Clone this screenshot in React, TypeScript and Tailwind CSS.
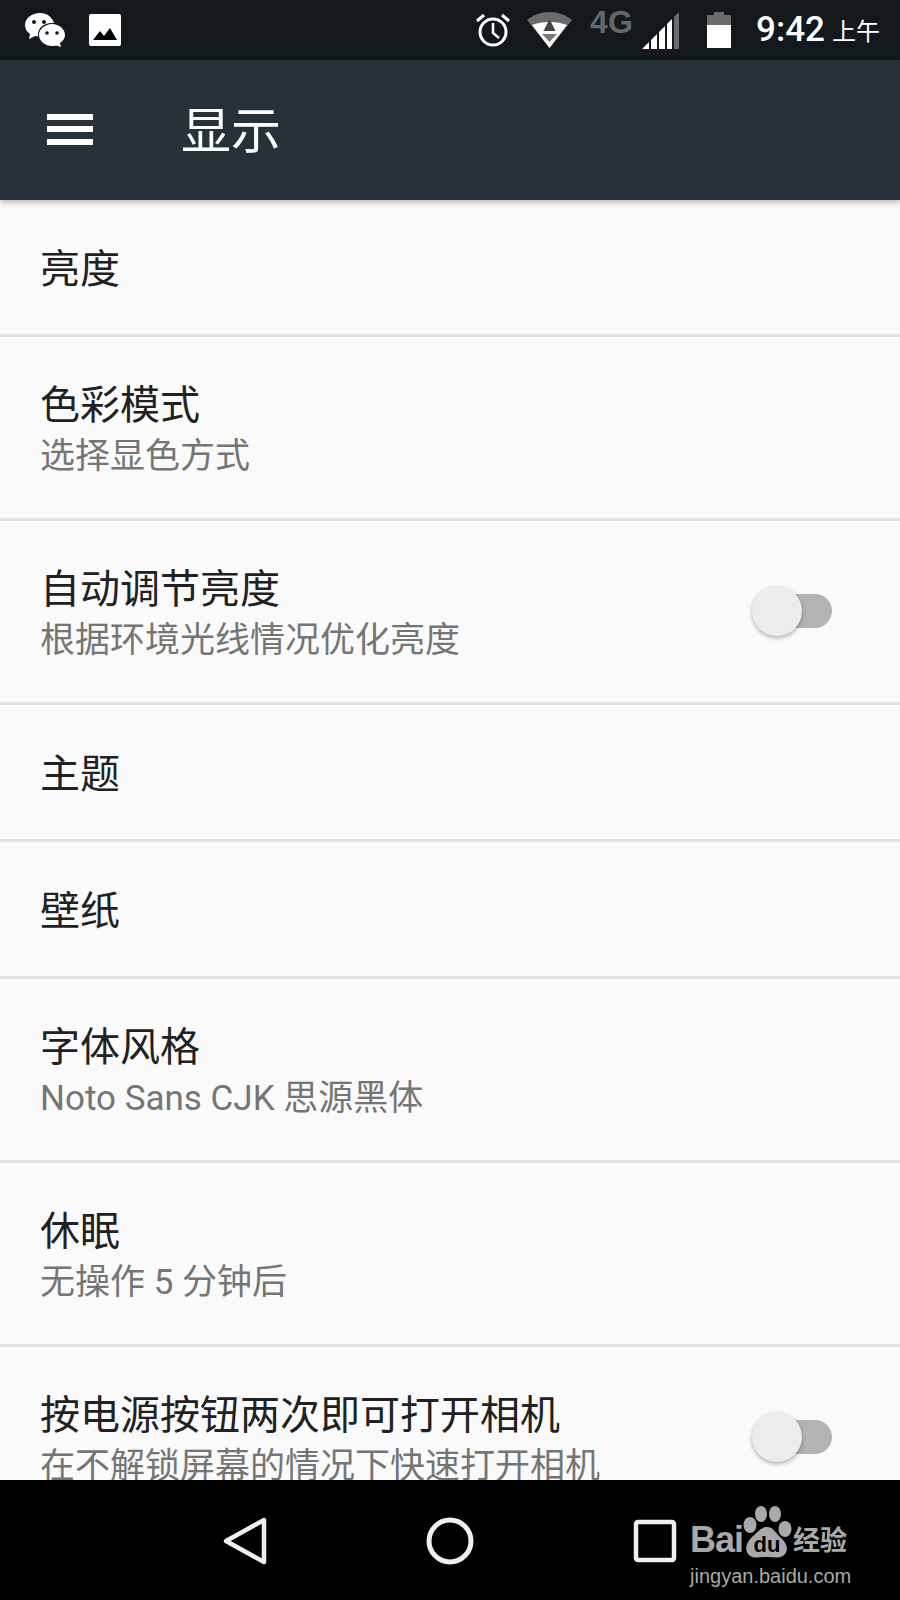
const cjk = 'Roboto, "Noto Sans CJK SC", "Noto Sans", sans-serif';

function Toggle() {
  return (
    <div className="relative w-[80px] h-[50px] mb-[2px] flex items-center justify-end shrink-0">
      <div className="w-[68px] h-[34px] rounded-full bg-[#b3b3b3]"></div>
      <div className="absolute left-0 top-0 w-[50px] h-[50px] rounded-full bg-[#ececec] shadow-[0_2px_4px_rgba(0,0,0,0.3)]"></div>
    </div>
  );
}

function Row({ title, sub, toggle, height }: { title: string; sub?: string; toggle?: boolean; height: string }) {
  return (
    <div className={`${height} shrink-0 flex items-center justify-between pl-[40px] pr-[68px] border-b-[3px] border-[#e2e2e2]`}>
      <div className={sub ? 'mt-[9px]' : 'mt-[5px]'}>
        <div className="text-[40px] leading-[50px] text-[#212121]">{title}</div>
        {sub && <div className="text-[35px] leading-[52px] text-[#757575]">{sub}</div>}
      </div>
      {toggle && <Toggle />}
    </div>
  );
}

function StatusBar() {
  return (
    <div className="h-[60px] bg-[#12181b] flex items-center justify-between pl-[25px] pr-[20px] shrink-0">
      <div className="flex items-center gap-[24px]">
        <svg width="40" height="34" viewBox="0 0 40 34">
          <path d="M15 0C7 0 0 5 0 12c0 4 2 7 5 9l-1 5 6-3c1 .3 2 .5 3 .6C12 15 19 9 29 10 27 4 22 0 15 0z" fill="#fff" />
          <circle cx="9" cy="9" r="2" fill="#12181b" />
          <circle cx="19" cy="9" r="2" fill="#12181b" />
          <path d="M27 11c-7 0-13 5-13 11s6 11 13 11c2 0 3 0 4-.5l5 1.500-1-4c3-2 5-5 5-8 0-6-6-11-13-11z" fill="#fff" />
          <circle cx="22" cy="20" r="1.800" fill="#12181b" />
          <circle cx="32" cy="20" r="1.800" fill="#12181b" />
        </svg>
        <svg width="32" height="32" viewBox="0 0 32 32">
          <rect width="32" height="32" rx="2" fill="#fff" />
          <path d="M4 26l7-9 4 5 6-8 7 12z" fill="#000" />
        </svg>
      </div>
      <div className="flex items-center">
        <svg width="36" height="36" viewBox="0 0 36 36" fill="none" stroke="#fff" strokeWidth="3">
          <circle cx="18" cy="20" r="13" />
          <path d="M18 11v10l6 5" strokeWidth="2.500" />
          <path d="M2 9l7-6M34 9l-7-6" />
        </svg>
        <svg width="45" height="36" viewBox="0 0 45 36" className="ml-[16px]">
          <path d="M0 8C6 3 14 0 22.500 0S39 3 45 8L22.500 36z" fill="#6b6b6b" />
          <path d="M5 13c5-2 11-3 17.500-3S35 11 40 13L22.500 36z" fill="#fff" />
          <path d="M22.500 7l6 12h-12z" fill="#444" />
          <path d="M15 22h15l-7.500 8z" fill="#7a7a7a" />
        </svg>
        <div className="ml-[18px] w-[42px] -mt-[17px] text-[#666] text-[32px] leading-[34px] font-bold font-['Liberation_Sans']">4G</div>
        <svg width="37" height="37" viewBox="0 0 37 37" className="ml-[10px] mt-[1px]">
          <path d="M0 37L7 30v7zM9 28l6-6v15H9zM17 20l6-6v23h-6z" fill="#fff" />
          <path d="M25 12l5-5v30h-5z" fill="#fff" />
          <path d="M32 5l5-5v37h-5z" fill="#6b6b6b" />
        </svg>
        <svg width="24" height="36" viewBox="0 0 24 36" className="ml-[28px]">
          <path d="M7 0h10v3h7v10H0V3h7z" fill="#6b6b6b" />
          <path d="M0 13h24v23H0z" fill="#fff" />
        </svg>
        <div className="ml-[25px] text-white text-[35px] leading-[60px] font-medium font-['Roboto']">9:42</div>
        <div className="ml-[7px] text-white text-[24px] leading-[60px] mt-[4px]">上午</div>
      </div>
    </div>
  );
}

function NavBar() {
  return (
    <div className="relative h-[120px] bg-black flex items-start justify-center gap-[157px] pt-[37px] shrink-0">
      <svg width="48" height="48" viewBox="0 0 48 48" fill="none" stroke="#f0f0f0" strokeWidth="4.500" strokeLinejoin="round">
        <path d="M43 3v42L5 24z" />
      </svg>
      <svg width="48" height="48" viewBox="0 0 48 48" fill="none" stroke="#f0f0f0" strokeWidth="5">
        <circle cx="24" cy="24" r="21" />
      </svg>
      <svg width="48" height="48" viewBox="0 0 48 48" fill="none" stroke="#f0f0f0" strokeWidth="4.500" strokeLinejoin="round">
        <rect x="5" y="5" width="38" height="38" rx="2" />
      </svg>
      {/* Baidu watermark */}
      <div className="absolute left-[690px] top-[24px] w-[164px] text-[#a9a9a9]">
        <div className="flex items-end h-[60px]">
          <span className="text-[36px] leading-[38px] mb-[5px] font-bold font-['Liberation_Sans'] tracking-[-1px]">Bai</span>
          <svg width="50" height="60" viewBox="0 0 50 60" className="shrink-0 mb-[-1px]">
            <ellipse cx="18" cy="9" rx="6" ry="8" fill="#a9a9a9" />
            <ellipse cx="32" cy="9" rx="6" ry="8" fill="#a9a9a9" />
            <ellipse cx="7" cy="20" rx="6.500" ry="8" fill="#a9a9a9" />
            <ellipse cx="42" cy="24" rx="6.500" ry="8" fill="#a9a9a9" />
            <path d="M24 22c6 0 8 5 13 10 6 5 9 11 5 17-4 5-10 3-18 3s-14 2-18-2c-5-5-3-12 3-18 6-5 9-10 15-10z" fill="#a9a9a9" />
            <text x="24" y="47" textAnchor="middle" fontSize="22" fontWeight="700" fontFamily="Liberation Sans" fill="#000">du</text>
          </svg>
          <span className="text-[27px] leading-[36px] font-bold mb-[5px] whitespace-nowrap">经验</span>
        </div>
        <div className="text-[20px] leading-[20px] mt-[2px] font-['Liberation_Sans']">jingyan.baidu.com</div>
      </div>
    </div>
  );
}

export default function App() {
  return (
    <div className="w-[900px] h-[1600px] flex flex-col overflow-hidden bg-[#fafafa]" style={{ fontFamily: cjk }}>
      <StatusBar />
      <div className="relative z-10 h-[140px] bg-[#263238] flex items-center pl-[47px] shadow-[0_2px_6px_rgba(0,0,0,0.3)] shrink-0">
        <svg width="46" height="31" viewBox="0 0 46 31" fill="#fff" className="shrink-0 -mt-[1px]">
          <path d="M0 0h46v6H0zM0 12h46v6H0zM0 25h46v6H0z" />
        </svg>
        <div className="ml-[88px] text-[50px] leading-[60px] text-white mt-[3px]">显示</div>
      </div>
      <div className="flex-1 min-h-0 overflow-hidden flex flex-col">
        <Row height="h-[137px]" title="亮度" />
        <Row height="h-[184px]" title="色彩模式" sub="选择显色方式" />
        <Row height="h-[184px]" title="自动调节亮度" sub="根据环境光线情况优化亮度" toggle />
        <Row height="h-[137px]" title="主题" />
        <Row height="h-[137px]" title="壁纸" />
        <Row height="h-[184px]" title="字体风格" sub="Noto Sans CJK 思源黑体" />
        <Row height="h-[184px]" title="休眠" sub="无操作 5 分钟后" />
        <Row height="h-[184px]" title="按电源按钮两次即可打开相机" sub="在不解锁屏幕的情况下快速打开相机" toggle />
      </div>
      <NavBar />
    </div>
  );
}
